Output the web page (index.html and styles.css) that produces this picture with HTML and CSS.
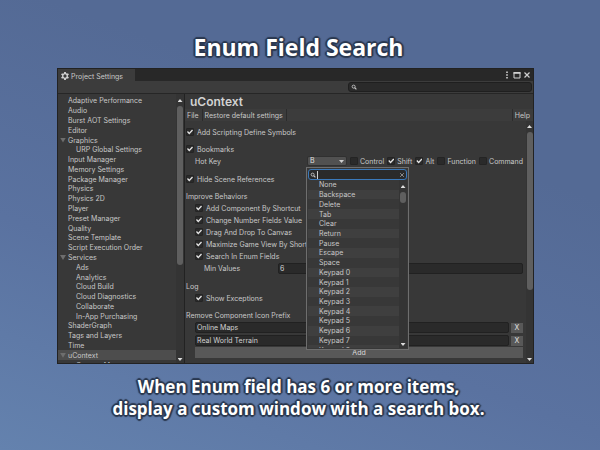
FILE: index.html
```html
<!DOCTYPE html>
<html lang="en">
<head>
<meta charset="utf-8">
<meta name="viewport" content="width=device-width, initial-scale=1">
<title>Enum Field Search</title>
<link rel="stylesheet" href="styles.css">
</head>
<body>
<h1 class="headline">Enum Field Search</h1>

<section class="window" aria-label="Project Settings">
  <header class="tabbar">
    <div class="tab">
      <svg class="gear" viewBox="0 0 16 16" aria-hidden="true"><circle cx="8" cy="8" r="4.600" fill="none" stroke="currentColor" stroke-width="2.600"/><path d="M8 0v3M8 13v3M1.100 4l2.600 1.500M12.300 10.500l2.600 1.500M1.100 12l2.600-1.500M12.300 5.500l2.600-1.500" stroke="currentColor" stroke-width="3.600"/></svg>
      <span>Project Settings</span>
    </div>
    <div class="window-buttons">
      <button class="icon-button" aria-label="Menu"><svg viewBox="0 0 8 8"><path d="M3.200 .5h1.600v1.500H3.200zM3.200 3.200h1.600v1.500H3.200zM3.200 6h1.600v1.500H3.200z" fill="currentColor"/></svg></button>
      <button class="icon-button" aria-label="Maximize"><svg viewBox="0 0 8 8"><path d="M1 1.500h6v5.500H1z" fill="none" stroke="currentColor"/><path d="M.5 1h7v1.800h-7z" fill="currentColor"/></svg></button>
      <button class="icon-button" aria-label="Close"><svg viewBox="0 0 8 8"><path d="M1.500 1.500l5 5M6.500 1.500l-5 5" stroke="currentColor" stroke-width="1.200"/></svg></button>
    </div>
  </header>

  <div class="searchbar">
    <label class="search">
      <svg class="lens" viewBox="0 0 8 8" aria-hidden="true"><circle cx="3.500" cy="3.500" r="2" fill="none" stroke="currentColor" stroke-width="1.200"/><path d="M5 5l2.200 2.200" stroke="currentColor" stroke-width="1.500"/></svg>
      <input type="text" aria-label="Search settings">
    </label>
  </div>

  <div class="body">
    <nav class="sidebar">
      <ul class="tree">
        <li><a href="#">Adaptive Performance</a></li>
        <li><a href="#">Audio</a></li>
        <li><a href="#">Burst AOT Settings</a></li>
        <li><a href="#">Editor</a></li>
        <li class="open"><a href="#">Graphics</a></li>
        <li class="child"><a href="#">URP Global Settings</a></li>
        <li><a href="#">Input Manager</a></li>
        <li><a href="#">Memory Settings</a></li>
        <li><a href="#">Package Manager</a></li>
        <li><a href="#">Physics</a></li>
        <li><a href="#">Physics 2D</a></li>
        <li><a href="#">Player</a></li>
        <li><a href="#">Preset Manager</a></li>
        <li><a href="#">Quality</a></li>
        <li><a href="#">Scene Template</a></li>
        <li><a href="#">Script Execution Order</a></li>
        <li class="open"><a href="#">Services</a></li>
        <li class="child"><a href="#">Ads</a></li>
        <li class="child"><a href="#">Analytics</a></li>
        <li class="child"><a href="#">Cloud Build</a></li>
        <li class="child"><a href="#">Cloud Diagnostics</a></li>
        <li class="child"><a href="#">Collaborate</a></li>
        <li class="child"><a href="#">In-App Purchasing</a></li>
        <li><a href="#">ShaderGraph</a></li>
        <li><a href="#">Tags and Layers</a></li>
        <li><a href="#">Time</a></li>
        <li class="open selected"><a href="#">uContext</a></li>
        <li class="child"><a href="#">Context Menu</a></li>
      </ul>
      <div class="scrollbar"><span class="arrow up"></span><span class="track"><span class="thumb thumb-tree"></span></span><span class="arrow down"></span></div>
    </nav>

    <main class="panel">
      <h2 class="panel-title">uContext</h2>
      <div class="toolbar">
        <button>File</button>
        <button>Restore default settings</button>
        <button class="help">Help</button>
      </div>
      <div class="panel-body">
        <form class="form">
          <section>
            <label class="row"><input type="checkbox" checked>Add Scripting Define Symbols</label>
          </section>
          <section class="spaced">
            <label class="row"><input type="checkbox" checked>Bookmarks</label>
            <div class="row hotkey">
              <label class="hotkey-label" for="key">Hot Key</label>
              <div class="dropdown">
                <select id="key"><option>B</option></select>
                <div class="popup">
                  <label class="search active">
                    <svg class="lens" viewBox="0 0 8 8" aria-hidden="true"><circle cx="3.500" cy="3.500" r="2" fill="none" stroke="currentColor" stroke-width="1.200"/><path d="M5 5l2.200 2.200" stroke="currentColor" stroke-width="1.500"/></svg>
                    <span class="caret"></span>
                    <input type="text" aria-label="Search keys">
                    <svg class="clear" viewBox="0 0 8 8" aria-hidden="true"><path d="M1.500 1.500l5 5M6.500 1.500l-5 5" stroke="currentColor"/></svg>
                  </label>
                  <div class="popup-body">
                    <ul class="options">
                      <li>None</li>
                      <li>Backspace</li>
                      <li>Delete</li>
                      <li>Tab</li>
                      <li>Clear</li>
                      <li>Return</li>
                      <li>Pause</li>
                      <li>Escape</li>
                      <li>Space</li>
                      <li>Keypad 0</li>
                      <li>Keypad 1</li>
                      <li>Keypad 2</li>
                      <li>Keypad 3</li>
                      <li>Keypad 4</li>
                      <li>Keypad 5</li>
                      <li>Keypad 6</li>
                      <li>Keypad 7</li>
                      <li>Keypad 8</li>
                    </ul>
                    <div class="scrollbar"><span class="arrow up"></span><span class="track"><span class="thumb thumb-options"></span></span><span class="arrow down"></span></div>
                  </div>
                </div>
              </div>
              <div class="modifiers">
                <label><input type="checkbox">Control</label>
                <label><input type="checkbox" checked>Shift</label>
                <label><input type="checkbox" checked>Alt</label>
                <label><input type="checkbox">Function</label>
                <label><input type="checkbox">Command</label>
              </div>
            </div>
          </section>
          <section>
            <label class="row"><input type="checkbox" checked>Hide Scene References</label>
          </section>
          <section class="spaced">
            <h3 class="row">Improve Behaviors</h3>
            <div class="nested">
              <label class="row"><input type="checkbox" checked>Add Component By Shortcut</label>
              <label class="row"><input type="checkbox" checked>Change Number Fields Value</label>
              <label class="row"><input type="checkbox" checked>Drag And Drop To Canvas</label>
              <label class="row"><input type="checkbox" checked>Maximize Game View By Shortcut</label>
              <label class="row"><input type="checkbox" checked>Search In Enum Fields</label>
              <div class="row values">
                <label for="min">Min Values</label>
                <input class="field" id="min" type="text" value="6">
              </div>
            </div>
          </section>
          <section>
            <h3 class="row">Log</h3>
            <div class="nested">
              <label class="row"><input type="checkbox" checked>Show Exceptions</label>
            </div>
          </section>
          <section>
            <h3 class="row">Remove Component Icon Prefix</h3>
            <div class="nested">
              <div class="prefix"><input class="field" type="text" value="Online Maps" aria-label="Prefix 1"><button type="button">X</button></div>
              <div class="prefix"><input class="field" type="text" value="Real World Terrain" aria-label="Prefix 2"><button type="button">X</button></div>
              <button class="add" type="button">Add</button>
            </div>
          </section>
        </form>
        <div class="scrollbar"><span class="arrow up"></span><span class="track"><span class="thumb thumb-panel"></span></span><span class="arrow down"></span></div>
      </div>
    </main>
  </div>
</section>

<p class="caption">When Enum field has 6 or more items,<br>display a custom window with a search box.</p>
</body>
</html>
```
FILE: styles.css
```css
* {
  box-sizing: border-box;
}

body {
  margin: 0;
  min-height: 100vh;
  padding: 31px 66px 0 57px;
  background: linear-gradient(200deg, #546a95 30%, #5a72a0 65%, #6482ae 100%);
  color: #c8c8c8;
  font: 7px/9px Inter, "Liberation Sans", sans-serif;
}

h1, h2, h3, p, ul {
  margin: 0;
  padding: 0;
  font-weight: inherit;
  font-size: inherit;
}

ul {
  list-style: none;
}

a {
  color: inherit;
  text-decoration: none;
}

button, input, select {
  margin: 0;
  padding: 0;
  border: 0;
  border-radius: 0;
  background: none;
  color: inherit;
  font: inherit;
  appearance: none;
  outline: none;
}

.headline,
.caption {
  color: #fff;
  font-family: "Open Sans", "Noto Sans", sans-serif;
  font-weight: 700;
  text-align: center;
  white-space: nowrap;
  text-shadow: 2px 0 1px #2b3950, -2px 0 1px #2b3950, 0 2px 1px #2b3950, 0 -2px 1px #2b3950,
    1px 1px 1px #2b3950, -1px 1px 1px #2b3950, 1px -1px 1px #2b3950, -1px -1px 1px #2b3950;
}

.headline {
  font-size: 23px;
  line-height: 32px;
  margin: 0 -3px 5px 3px;
}

.caption {
  font-size: 17px;
  line-height: 22px;
  margin: 12px -3px 0 3px;
}

/* Window frame */

.window {
  border: 1px solid #222;
  background: #383838;
  overflow: hidden;
}

.tabbar {
  display: flex;
  justify-content: space-between;
  height: 12px;
  background: #282828;
}

.tab {
  display: flex;
  align-items: center;
  gap: 2px;
  padding: 2px 12px 0 3px;
  background: #3c3c3c;
}

.gear {
  width: 8px;
  height: 8px;
  color: #d8d8d8;
}

.window-buttons {
  display: flex;
  align-items: center;
  gap: 2px;
  padding-right: 2px;
  color: #d0d0d0;
}

.icon-button {
  width: 8px;
  height: 8px;
}

.icon-button svg {
  display: block;
  width: 8px;
  height: 8px;
}

.searchbar {
  display: flex;
  justify-content: flex-end;
  height: 13px;
  padding: 1px 1px;
  background: #3c3c3c;
  border-bottom: 1px solid #262626;
}

.search {
  display: flex;
  align-items: center;
  gap: 1px;
  width: 184px;
  height: 10px;
  padding: 0 2px;
  background: #2a2a2a;
  border: 1px solid #1f1f1f;
  border-radius: 3px;
}

.search input {
  flex: 1;
  min-width: 0;
}

.lens {
  width: 6px;
  height: 6px;
  color: #c4c4c4;
}

.body {
  display: grid;
  grid-template-columns: 127px 1fr;
  height: 269px;
}

/* Settings tree */

.sidebar {
  display: flex;
  min-height: 0;
  border-right: 1px solid #222;
}

.tree {
  flex: 1;
  display: grid;
  grid-auto-rows: 1fr;
  height: 276px;
  padding-top: 2px;
  white-space: nowrap;
}

.tree li {
  display: flex;
  align-items: center;
  padding-left: 10px;
}

.tree .child {
  padding-left: 18px;
}

.tree .open {
  gap: 2px;
  padding-left: 2px;
}

.tree .open::before {
  content: "";
  width: 6px;
  height: 5px;
  background: #6e6e6e;
  clip-path: polygon(0 0, 100% 0, 50% 100%);
}

.tree .selected {
  background: #4d4d4d;
}

/* Scrollbars */

.scrollbar {
  display: flex;
  flex-direction: column;
  align-items: center;
  flex: none;
  width: 8px;
  padding: 5px 0 2px;
  background: #343434;
}

.arrow {
  width: 5px;
  height: 3px;
  background: #dcdcdc;
}

.up {
  clip-path: polygon(50% 0, 100% 100%, 0 100%);
}

.down {
  clip-path: polygon(0 0, 100% 0, 50% 100%);
}

.track {
  flex: 1;
  width: 6px;
  padding-top: 4px;
}

.thumb {
  display: block;
  border-radius: 3px;
  background: #5f5f5f;
}

.thumb-tree {
  height: 63%;
}

.thumb-panel {
  height: 70%;
}

.thumb-options {
  height: 11px;
}

/* Settings panel */

.panel {
  display: flex;
  flex-direction: column;
  min-width: 0;
  min-height: 0;
}

.panel-title {
  padding-left: 5px;
  color: #d2d2d2;
  font-size: 12px;
  font-weight: 600;
  line-height: 15px;
}

.toolbar {
  display: flex;
  height: 12px;
  background: #3c3c3c;
}

.toolbar button {
  padding: 1px 3px 0 2px;
  border-right: 1px solid #2c2c2c;
}

.toolbar .help {
  margin-left: auto;
  border-right: 0;
  border-left: 1px solid #2c2c2c;
}

.panel-body {
  flex: 1;
  display: flex;
  min-height: 0;
}

.panel-body > .scrollbar {
  width: 7px;
  padding-top: 4px;
}

.form {
  flex: 1;
  display: flex;
  flex-direction: column;
  gap: 5px;
  min-width: 0;
  padding: 5px 3px 0 1px;
  white-space: nowrap;
}

.spaced {
  padding-bottom: 1px;
}

.row {
  display: flex;
  align-items: center;
  gap: 3px;
  height: 12px;
}

.nested {
  padding-left: 9px;
}

input[type="checkbox"] {
  display: grid;
  place-items: center;
  width: 8px;
  height: 8px;
  background: #2a2a2a;
  border: 1px solid #242424;
  border-radius: 1px;
}

input[type="checkbox"]:checked::before {
  content: "";
  width: 6px;
  height: 6px;
  background: #e4e4e4;
  clip-path: polygon(0 50%, 16% 34%, 38% 58%, 84% 8%, 100% 24%, 38% 90%);
}

.hotkey {
  gap: 0;
}

.hotkey-label {
  flex: 0 1 121px;
  padding-left: 9px;
}

.dropdown {
  position: relative;
  flex: none;
  width: 40px;
}

.dropdown select {
  display: block;
  width: 100%;
  height: 10px;
  padding-left: 2px;
  background: #515151;
  border: 1px solid #303030;
  border-radius: 2px;
  color: #e0e0e0;
  line-height: 8px;
}

.dropdown::after {
  content: "";
  position: absolute;
  top: 4px;
  right: 3px;
  width: 5px;
  height: 3px;
  background: #d0d0d0;
  clip-path: polygon(0 0, 100% 0, 50% 100%);
}

.modifiers {
  flex: 1;
  display: flex;
  justify-content: space-between;
  padding-left: 3px;
}

.modifiers label {
  display: flex;
  align-items: center;
  gap: 2px;
}

.values {
  gap: 0;
}

.values label {
  width: 83px;
  padding-left: 9px;
}

.field {
  flex: 1;
  min-width: 0;
  height: 11px;
  padding: 0 1px;
  background: #2a2a2a;
  border: 1px solid #212121;
  border-radius: 2px;
  color: #d2d2d2;
}

.prefix {
  display: flex;
  align-items: center;
  gap: 2px;
  height: 13px;
}

.prefix button {
  width: 12px;
  height: 10px;
  background: #585858;
  color: #e0e0e0;
}

.add {
  display: block;
  width: 100%;
  height: 11px;
  background: #585858;
  color: #d8d8d8;
}

/* Enum popup */

.popup {
  position: absolute;
  z-index: 1;
  top: 11px;
  left: -1px;
  width: 103px;
  height: 183px;
  padding: 1px;
  border: 1px solid #6e6e6e;
  background: #383838;
  display: flex;
  flex-direction: column;
}

.popup .active {
  flex: none;
  width: 100%;
  height: 11px;
  padding: 0 1px;
  border-color: #3a79bb;
}

.caret {
  width: 1px;
  height: 8px;
  background: #d0d0d0;
}

.clear {
  width: 6px;
  height: 6px;
  color: #aaa;
}

.popup-body {
  flex: 1;
  display: flex;
  min-height: 0;
  overflow: hidden;
}

.options {
  flex: 1;
  display: grid;
  grid-auto-rows: 1fr;
  height: 175px;
}

.options li {
  display: flex;
  align-items: center;
  padding-left: 11px;
}

.options li:nth-child(even) {
  background: #3f3f3f;
}
```
